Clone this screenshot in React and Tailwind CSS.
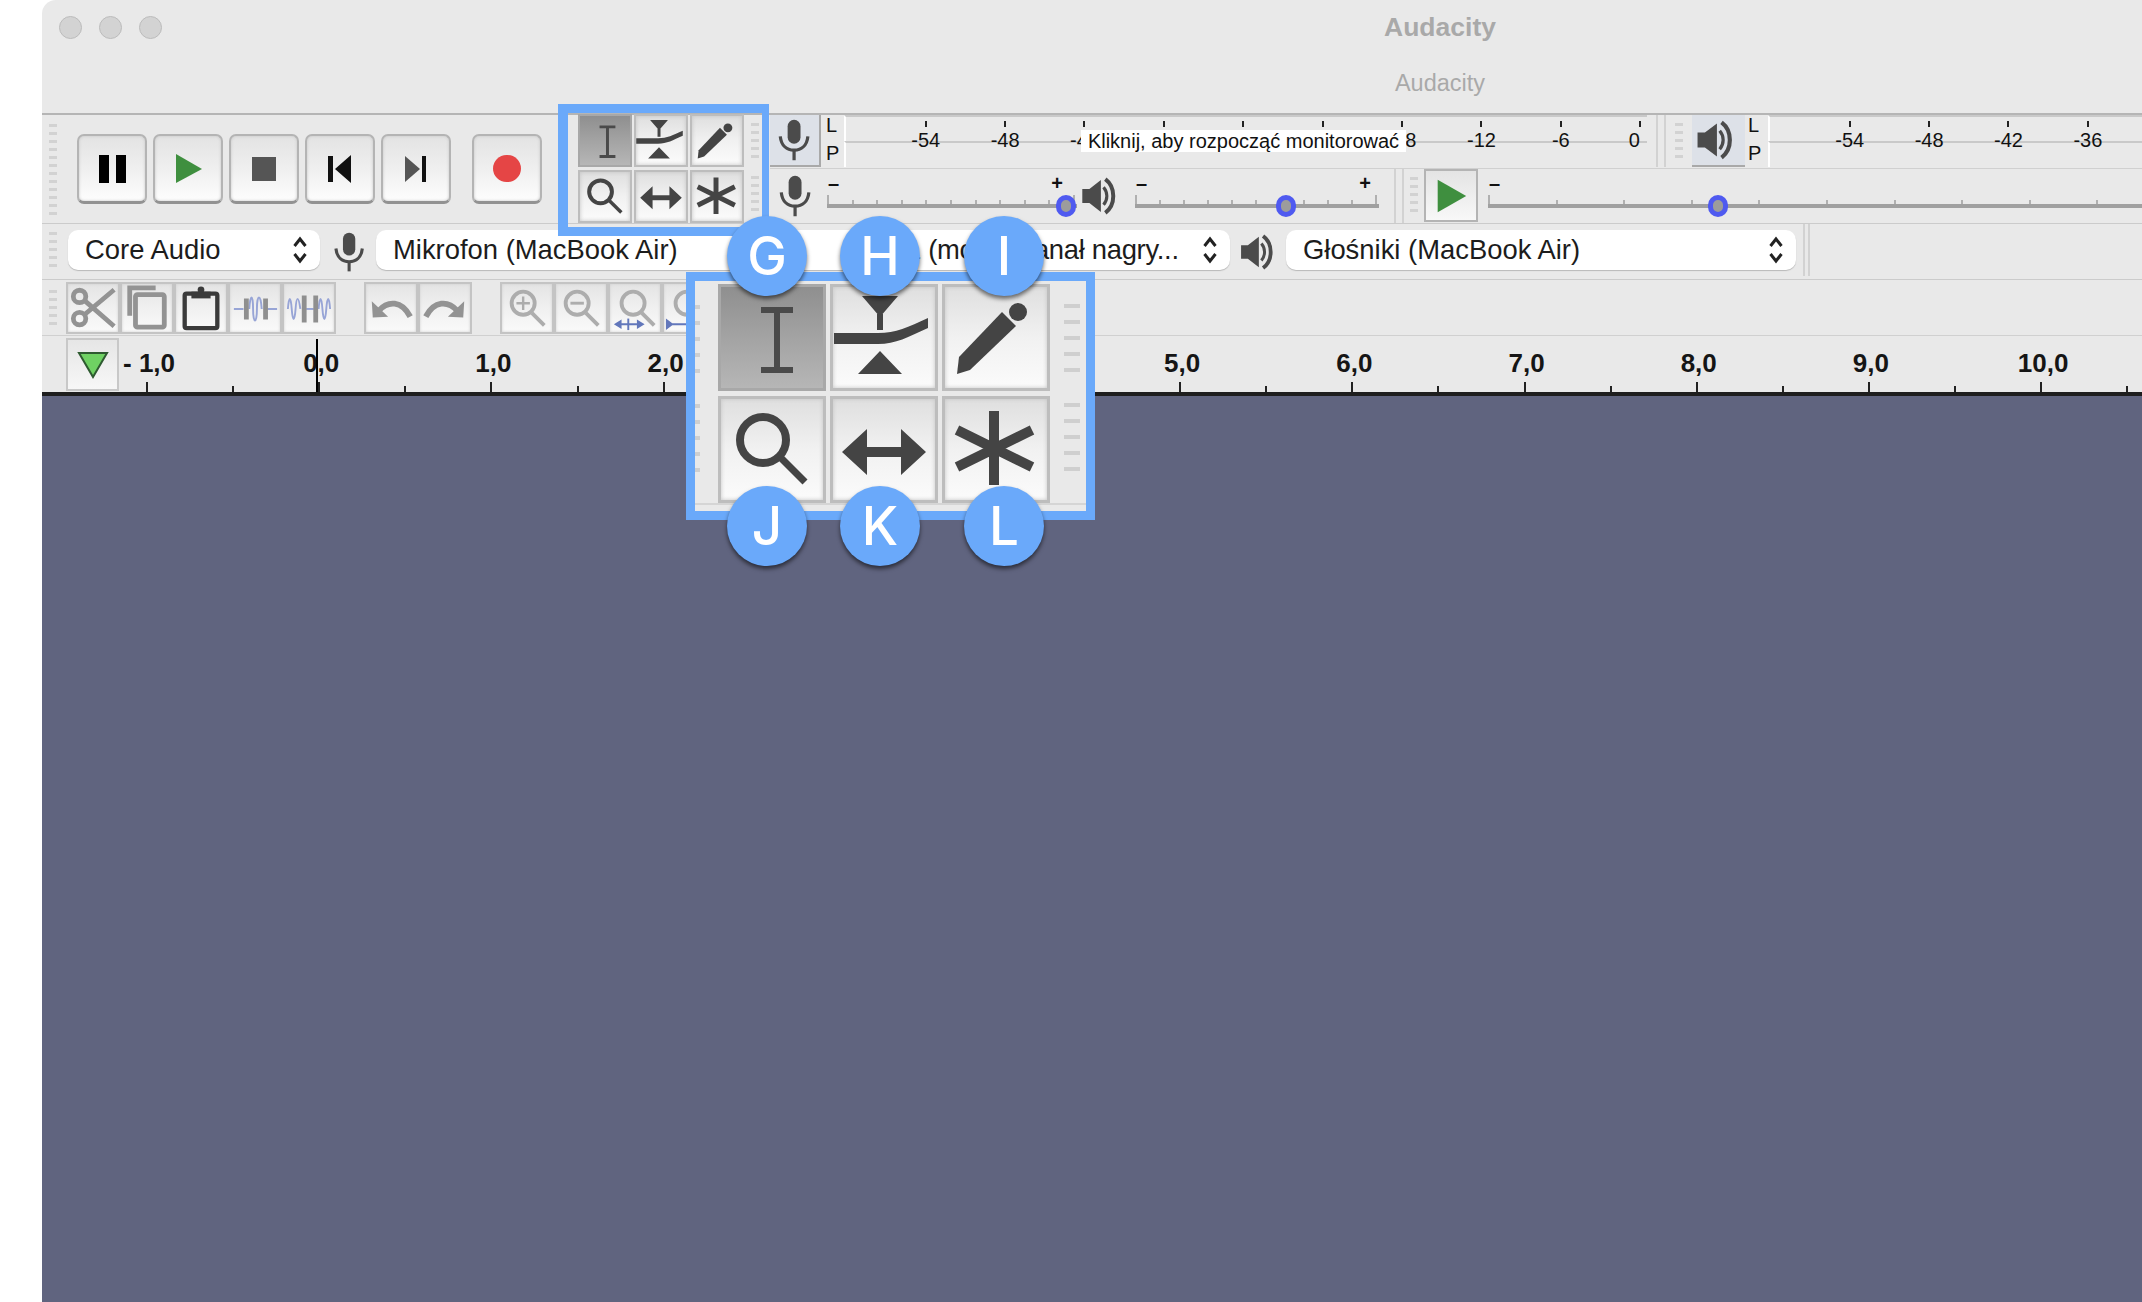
import React from "react"

const inputMeter = ["-54", "-48", "-42", "", "", "", "-18", "-12", "-6", "0"]
const outputMeter = ["-54", "-48", "-42", "-36"]
const rulerLabels = ["- 1,0", "0,0", "1,0", "2,0", "3,0", "4,0", "5,0", "6,0", "7,0", "8,0", "9,0", "10,0"]

function Grip({ count, size = "small" }) {
  const lines = Array.from({ length: count })
  if (size === "large") {
    return (
      <div className="flex flex-col gap-[12px]">
        {lines.map((_, i) => <div key={i} className="w-[16px] h-[4px] bg-[#cfcfcf]" />)}
      </div>
    )
  }
  return (
    <div className="flex flex-col gap-[5px]">
      {lines.map((_, i) => <div key={i} className="w-[8px] h-[3px] bg-[#d2d2d2]" />)}
    </div>
  )
}

function Mic({ className }) {
  return (
    <svg viewBox="0 0 50 52" className={className}>
      <rect x="17" y="4" width="14" height="26" rx="7" fill="#4b4b4b" />
      <path d="M9 22c1 10 7 15 15 15s14-5 15-15" fill="none" stroke="#4b4b4b" strokeWidth="3.500" />
      <path d="M24 37v11" stroke="#4b4b4b" strokeWidth="3.500" />
    </svg>
  )
}

function Speaker({ className }) {
  return (
    <svg viewBox="0 0 46 52" className={className}>
      <path d="M3 18h8l13-10v36L11 34H3z" fill="#4b4b4b" />
      <path d="M27 16c5 6 5 14 0 20" fill="none" stroke="#4b4b4b" strokeWidth="3.500" />
      <path d="M29 7c12 9 12 29 0 38" fill="none" stroke="#4b4b4b" strokeWidth="4.500" />
    </svg>
  )
}

function Chevrons() {
  return (
    <svg viewBox="0 0 16 32" className="w-[16px] h-[32px] shrink-0">
      <path d="M2.500 12L8 5l5.500 7M2.500 20L8 27l5.500-7" fill="none" stroke="#222" strokeWidth="3" />
    </svg>
  )
}

function TransportButton({ children, className = "" }) {
  return (
    <div className={`w-[70px] h-[70px] shrink-0 flex items-center justify-center rounded-[7px] border-2 border-b-[3px] border-[#b4b4b4] border-b-[#929292] bg-gradient-to-b from-[#e3e3e3] via-[#efefef] to-[#fdfdfd] shadow-[inset_0_0_3px_#c4c4c4] ${className}`}>
      {children}
    </div>
  )
}

function ToolIcon({ name, className }) {
  const c = "#444"
  return (
    <svg viewBox="0 0 108 107" className={className}>
      {name === "select" && <path d="M43 26h32M59 26v60M43 86h32" fill="none" stroke="#4a4a4a" strokeWidth="6" />}
      {name === "envelope" && (
        <g fill={c}>
          <path d="M32 12h36L50 33zM50 67l22 23H28z" />
          <path d="M47 30h6v16h-6z" />
          <path d="M4 49h44c18 0 30-6 50-15v10c-20 9-32 16-50 16H4z" />
        </g>
      )}
      {name === "draw" && (
        <g fill={c}>
          <path d="M60 28l14 14-46 44-13 4 2-17z" />
          <circle cx="76" cy="28" r="9" />
        </g>
      )}
      {name === "zoom" && (
        <g fill="none" stroke={c}>
          <circle cx="45" cy="44" r="23" strokeWidth="8" />
          <path d="M63 62l24 24" strokeWidth="7" />
        </g>
      )}
      {name === "slide" && (
        <g fill={c}>
          <path d="M12 56l25-23v46zM96 56L71 33v46z" />
          <path d="M30 51h48v10H30z" />
        </g>
      )}
      {name === "multi" && (
        <g fill="none" stroke={c} strokeWidth="10">
          <path d="M52 15v74M15 34l75 37M15 71l75-37" />
        </g>
      )}
    </svg>
  )
}

function ToolButton({ name, pressed, large }) {
  const box = large ? "w-[108px] h-[107px]" : "w-[54px] h-[53px]"
  const look = pressed
    ? "bg-gradient-to-b from-[#8f8f8f] via-[#a3a3a3] to-[#b6b6b6] border-[#a8a8a8]"
    : "bg-gradient-to-b from-[#dfdfdf] via-[#f1f1f1] to-[#fbfbfb] border-[#bdbdbd] shadow-[inset_0_0_4px_#c4c4c4]"
  return (
    <div className={`${box} ${look} ${large ? "border-[3px]" : "border-2"} flex items-center justify-center`}>
      <ToolIcon name={name} className={large ? "w-[108px] h-[107px] shrink-0 blur-[0.7px]" : "w-[54px] h-[53px] shrink-0"} />
    </div>
  )
}

function EditIcon({ name }) {
  const g = "#939393"
  const z = "#adadad"
  const blue = "#98a5d6"
  return (
    <svg viewBox="0 0 52 50" className="w-[50px] h-[48px] blur-[0.4px]">
      {name === "cut" && (
        <g fill="none" stroke={g} strokeWidth="5">
          <circle cx="12" cy="13" r="6.500" />
          <circle cx="12" cy="36" r="6.500" />
          <path d="M17 17l31 27M17 32L48 6" />
        </g>
      )}
      {name === "copy" && (
        <g fill="none" stroke={g} strokeWidth="5">
          <path d="M8 33V4h27" />
          <rect x="14" y="11" width="30" height="34" rx="2" />
        </g>
      )}
      {name === "paste" && (
        <g>
          <rect x="9" y="10" width="34" height="36" rx="2" fill="none" stroke="#3a3a3a" strokeWidth="4.500" />
          <path d="M16 8h20v7H16z" fill="#3a3a3a" />
          <circle cx="26" cy="6" r="3.500" fill="#3a3a3a" />
        </g>
      )}
      {name === "trim" && (
        <g fill="none">
          <path d="M4 26h10M39 26h10" stroke={blue} strokeWidth="2" />
          <path d="M20 26c1-16 4-16 4 0s4 16 4 0 4-16 5 0" stroke={blue} strokeWidth="2" />
          <path d="M17 15v22M37 15v22" stroke="#8f8f8f" strokeWidth="5" />
        </g>
      )}
      {name === "silence" && (
        <g fill="none">
          <path d="M4 26c1-14 3-14 4 0s3 14 4 0 3-14 5 0M36 26c1-14 3-14 4 0s3 14 4 0 3-14 4 0" stroke={blue} strokeWidth="2" />
          <path d="M23 26h8" stroke={blue} strokeWidth="2" />
          <path d="M21 12v28M33 12v28" stroke="#8f8f8f" strokeWidth="5" />
        </g>
      )}
      {name === "undo" && (
        <g>
          <path d="M6 18l1 17 16-1z" fill={g} />
          <path d="M13 28c10-11 24-11 33 6" fill="none" stroke={g} strokeWidth="6" />
        </g>
      )}
      {name === "redo" && (
        <g>
          <path d="M46 18l-1 17-16-1z" fill={g} />
          <path d="M39 28C29 17 15 17 6 34" fill="none" stroke={g} strokeWidth="6" />
        </g>
      )}
      {name === "zoomin" && (
        <g fill="none" stroke={z}>
          <circle cx="22" cy="20" r="12" strokeWidth="4" />
          <path d="M31 30l13 13" strokeWidth="4" />
          <path d="M22 13v14M15 20h14" strokeWidth="2.500" />
        </g>
      )}
      {name === "zoomout" && (
        <g fill="none" stroke={z}>
          <circle cx="22" cy="20" r="12" strokeWidth="4" />
          <path d="M31 30l13 13" strokeWidth="4" />
          <path d="M15 20h14" strokeWidth="3" />
        </g>
      )}
      {name === "fit" && (
        <g>
          <g fill="none" stroke={z} strokeWidth="4">
            <circle cx="24" cy="20" r="12" />
            <path d="M33 30l13 13" />
          </g>
          <path d="M4 42l8-5v10zM12 41h16v2H12zM36 42l-8-5v10z" fill="#6277bb" />
          <path d="M19 36v12" stroke="#6277bb" strokeWidth="2" />
        </g>
      )}
      {name === "fitv" && (
        <g>
          <g fill="none" stroke={z} strokeWidth="4">
            <circle cx="24" cy="20" r="12" />
            <path d="M33 30l13 13" />
          </g>
          <path d="M2 36l8 6-8 6zM8 41h24v2H8z" fill="#6277bb" />
        </g>
      )}
    </svg>
  )
}

function EditButton({ name }) {
  return (
    <div className="w-[54px] h-[52px] shrink-0 flex items-center justify-center border-2 border-[#c4c4c4] bg-gradient-to-b from-[#e4e4e4] via-[#f0f0f0] to-[#fafafa] shadow-[inset_0_0_3px_#cfcfcf]">
      <EditIcon name={name} />
    </div>
  )
}

function Select({ text, className = "" }) {
  return (
    <div className={`h-[40px] shrink-0 flex items-center justify-between pl-[17px] pr-[12px] bg-white rounded-[10px] shadow-[0_1px_1px_#b9b9b9] text-[27.4px] leading-none text-[#1c1c1c] whitespace-nowrap ${className}`}>
      <span>{text}</span>
      <Chevrons />
    </div>
  )
}

function Meter({ labels, className = "", children }) {
  return (
    <div className={`relative h-[52px] flex flex-col overflow-hidden ${className}`}>
      <div className="h-[26px] border-t-2 border-l-2 border-t-[#c9c9c9] border-l-white" />
      <div className="h-[26px] border-t-2 border-l-2 border-t-[#c9c9c9] border-l-white" />
      <div className="absolute inset-0 flex pl-[42px] text-[20px] leading-none text-[#111]">
        {labels.map((label, i) => (
          <div key={i} className="w-[79.4px] shrink-0 flex flex-col items-center pt-[6px]">
            <div className="w-[2px] h-[6px] bg-[#222]" />
            <span className={`mt-[3px] ${label === "0" ? "-translate-x-[6px]" : ""}`}>{label}</span>
          </div>
        ))}
      </div>
      {children}
    </div>
  )
}

function ChannelLetters({ className = "pl-[5px]" }) {
  return (
    <div className={`w-[23px] h-[52px] -mt-[2px] shrink-0 flex flex-col items-start justify-between text-[20px] leading-[24px] text-[#111] ${className}`}>
      <span>L</span>
      <span>P</span>
    </div>
  )
}

function Slider({ ticks, thumb, plus, labelPad = "", className = "" }) {
  return (
    <div className={`relative h-full flex flex-col justify-end pb-[15px] ${className}`}>
      <div className={`flex justify-between px-[1px] h-[22px] text-[20px] font-bold leading-none text-[#111] ${labelPad}`}>
        <span>–</span>
        {plus && <span>+</span>}
      </div>
      <div className="flex justify-between items-end h-[9px] pr-[2px]">
        {Array.from({ length: ticks }).map((_, i) => (
          <div key={i} className={`w-[2px] bg-[#b0b0b0] ${i === 0 || (plus && i === ticks - 1) ? "h-[9px]" : "h-[4px]"}`} />
        ))}
      </div>
      <div className="h-[4px] bg-[#a0a0a0]" />
      <div className={`absolute bottom-[6px] w-[20px] h-[22px] rounded-full border-[5px] border-[#4f5af0] bg-[#9c9c9c] ${thumb}`} />
    </div>
  )
}

function Callout() {
  const names = ["select", "envelope", "draw", "zoom", "slide", "multi"]
  return (
    <div className="absolute left-[686px] top-[272px] w-[409px] h-[248px] border-[9px] border-[#6aa9fa] bg-[#e9e9e9] flex flex-col">
      <div className="flex pt-[3px] border-b-2 border-[#d5d5d5] h-[224px]">
        <div className="w-[5px] pt-[21px] overflow-hidden shrink-0">
          <Grip count={5} size="large" />
          <div className="h-[31px]" />
          <Grip count={5} size="large" />
        </div>
        <div className="grid grid-cols-[108px_108px_108px] grid-rows-[107px_107px] gap-x-[4px] gap-y-[5px] ml-[18px]">
          {names.map((n, i) => <ToolButton key={n} name={n} pressed={i === 0} large />)}
        </div>
        <div className="ml-[14px] pt-[20px]">
          <Grip count={5} size="large" />
          <div className="h-[31px]" />
          <Grip count={5} size="large" />
        </div>
      </div>
    </div>
  )
}

function Badge({ letter, className }) {
  return (
    <div className={`absolute w-[80px] h-[80px] rounded-full bg-[#6aa9fa] shadow-[0_3px_4px_rgba(0,0,0,0.55)] flex items-center justify-center text-white text-[53px] font-medium leading-none font-['Inter',sans-serif] ${className}`}>
      {letter}
    </div>
  )
}

export default function App() {
  return (
    <div className="relative w-[2142px] h-[1302px] overflow-hidden bg-white flex font-['Liberation_Sans',Arial,sans-serif]">
      <div className="w-[42px] shrink-0" />

      <div className="flex-1 min-w-0 flex flex-col bg-[#e9e9e9] rounded-tl-[14px] overflow-hidden">
        {/* title bar, the window runs on past the right edge so the title sits off centre */}
        <div className="relative h-[113px] shrink-0 flex flex-col items-center pl-[696px]">
          <div className="absolute left-[17px] top-[16px] flex gap-[17px]">
            <div className="w-[23px] h-[23px] rounded-full bg-[#d3d3d3] border border-[#bcbcbc]" />
            <div className="w-[23px] h-[23px] rounded-full bg-[#d3d3d3] border border-[#bcbcbc]" />
            <div className="w-[23px] h-[23px] rounded-full bg-[#d3d3d3] border border-[#bcbcbc]" />
          </div>
          <div className="mt-[12px] text-[26.500px] leading-[30px] font-bold text-[#a9a9a9]">Audacity</div>
          <div className="mt-[28px] text-[23.500px] leading-[26px] text-[#a9a9a9]">Audacity</div>
        </div>

        {/* transport, tools, meters */}
        <div className="h-[111px] shrink-0 flex border-t-2 border-b border-t-[#b5b5b5] border-b-[#cbcbcb]">
          <div className="w-[516px] shrink-0 flex items-center pl-[7px]">
            <Grip count={12} />
            <div className="flex gap-[6px] ml-[20px]">
              <TransportButton>
                <div className="flex gap-[7px]">
                  <div className="w-[10px] h-[28px] bg-black" />
                  <div className="w-[10px] h-[28px] bg-black" />
                </div>
              </TransportButton>
              <TransportButton>
                <svg viewBox="0 0 32 32" className="w-[32px] h-[32px]"><path d="M4 1l26 15L4 30z" fill="#3f8f3f" /></svg>
              </TransportButton>
              <TransportButton>
                <div className="w-[24px] h-[24px] bg-[#555]" />
              </TransportButton>
              <TransportButton>
                <svg viewBox="0 0 32 32" className="w-[32px] h-[32px]"><path d="M4 3h5v26H4zM27 2v28L11 16z" fill="#111" /></svg>
              </TransportButton>
              <TransportButton>
                <svg viewBox="0 0 32 32" className="w-[32px] h-[32px]"><path d="M5 3v26l15-13z" fill="#555" /><path d="M22 3h4v26h-4z" fill="#111" /></svg>
              </TransportButton>
              <TransportButton className="ml-[15px]">
                <div className="w-[28px] h-[27px] rounded-full bg-[#e54545]" />
              </TransportButton>
            </div>
          </div>

          <div className="w-[212px] shrink-0 flex -mt-[1px] pl-[20px]">
            <div className="grid grid-cols-[54px_54px_54px] grid-rows-[53px_53px] gap-x-[2px] gap-y-[3px]">
              <ToolButton name="select" pressed />
              <ToolButton name="envelope" />
              <ToolButton name="draw" />
              <ToolButton name="zoom" />
              <ToolButton name="slide" />
              <ToolButton name="multi" />
            </div>
            <div className="ml-[7px] pt-[9px]">
              <Grip count={5} />
              <div className="h-[18px]" />
              <Grip count={5} />
            </div>
          </div>

          <div className="flex-1 min-w-0 flex flex-col">
            <div className="h-[53px] shrink-0 flex">
              <div className="w-[51px] h-[52px] shrink-0 flex items-center justify-center bg-[#dde1e8] border-r-2 border-b-2 border-[#a9a9a9]">
                <Mic className="w-[46px] h-[48px]" />
              </div>
              <ChannelLetters />
              <Meter labels={inputMeter} className="w-[803px] shrink-0">
                <div className="absolute left-[237px] top-[15px] w-[325px] h-[22px] bg-white flex items-center justify-center text-[20px] leading-none text-[#111] whitespace-nowrap">
                  Kliknij, aby rozpocząć monitorować
                </div>
              </Meter>
              <div className="w-[2px] h-[52px] ml-[9px] bg-[#d2d2d2] shrink-0" />
              <div className="w-[2px] h-[52px] ml-[6px] bg-[#d2d2d2] shrink-0" />
              <div className="ml-[9px] pt-[8px] shrink-0"><Grip count={5} /></div>
              <div className="w-[53px] h-[52px] ml-[9px] shrink-0 flex items-center justify-center bg-[#dde1e8] border-b-2 border-[#a9a9a9]">
                <Speaker className="w-[44px] h-[48px] -translate-x-[3px]" />
              </div>
              <ChannelLetters className="pl-[3px]" />
              <Meter labels={outputMeter} className="flex-1 min-w-0" />
            </div>

            <div className="flex-1 flex border-t border-[#d0d0d0]">
              <div className="w-[51px] shrink-0 flex items-center justify-center">
                <Mic className="w-[46px] h-[48px]" />
              </div>
              <Slider ticks={11} plus labelPad="pr-[14px]" thumb="left-[229px]" className="w-[250px] ml-[6px] shrink-0" />
              <div className="w-[46px] shrink-0 flex items-center justify-center">
                <Speaker className="w-[42px] h-[46px]" />
              </div>
              <Slider ticks={11} plus labelPad="pr-[8px]" thumb="left-[141px]" className="w-[244px] ml-[12px] shrink-0" />
              <div className="w-[2px] ml-[15px] bg-[#d2d2d2] shrink-0" />
              <div className="w-[2px] ml-[6px] bg-[#d2d2d2] shrink-0" />
              <div className="ml-[6px] pt-[8px] shrink-0"><Grip count={5} /></div>
              <div className="w-[54px] h-[53px] ml-[6px] shrink-0 flex items-center justify-center border-2 border-[#b4b4b4] bg-gradient-to-b from-[#e4e4e4] to-[#f8f8f8]">
                <svg viewBox="0 0 40 40" className="w-[38px] h-[38px]"><path d="M6 3l30 17L6 37z" fill="#3f8f3f" /></svg>
              </div>
              <Slider ticks={11} thumb="left-[220px]" className="w-[680px] ml-[10px] shrink-0" />
            </div>
          </div>
        </div>

        {/* device row */}
        <div className="h-[56px] shrink-0 flex items-center pb-[4px] border-b border-[#cbcbcb]">
          <div className="ml-[7px] shrink-0"><Grip count={5} /></div>
          <Select text="Core Audio" className="w-[252px] ml-[11px]" />
          <div className="w-[56px] shrink-0 flex justify-center pl-[3px] pt-[4px]"><Mic className="w-[44px] h-[46px]" /></div>
          <Select text="Mikrofon (MacBook Air)" className="w-[504px]" />
          <Select text="1 (mono) kanał nagry..." className="w-[341px] ml-[9px] tracking-[-0.3px]" />
          <div className="w-[56px] shrink-0 flex justify-center pt-[4px]"><Speaker className="w-[40px] h-[44px]" /></div>
          <Select text="Głośniki (MacBook Air)" className="w-[510px]" />
          <div className="w-[2px] h-[52px] ml-[7px] bg-[#d2d2d2] shrink-0" />
          <div className="w-[2px] h-[52px] ml-[3px] bg-[#d2d2d2] shrink-0" />
        </div>

        {/* edit row */}
        <div className="h-[56px] shrink-0 flex items-center border-b border-[#d0d0d0]">
          <div className="ml-[7px] shrink-0"><Grip count={5} /></div>
          <div className="flex ml-[9px]">
            <EditButton name="cut" />
            <EditButton name="copy" />
            <EditButton name="paste" />
            <EditButton name="trim" />
            <EditButton name="silence" />
          </div>
          <div className="flex ml-[28px]">
            <EditButton name="undo" />
            <EditButton name="redo" />
          </div>
          <div className="flex ml-[28px]">
            <EditButton name="zoomin" />
            <EditButton name="zoomout" />
            <EditButton name="fit" />
            <EditButton name="fitv" />
          </div>
        </div>

        {/* timeline ruler */}
        <div className="relative h-[56px] shrink-0 flex overflow-hidden">
          <div className="w-[53px] h-[53px] ml-[24px] mt-[2px] shrink-0 z-10 flex items-center justify-center border-2 border-[#c8c8c8] bg-gradient-to-b from-[#e6e6e6] to-[#f7f7f7]">
            <svg viewBox="0 0 34 30" className="w-[34px] h-[30px]"><path d="M3 3h28L17 27z" fill="#6fd163" stroke="#2e5a30" strokeWidth="2" /></svg>
          </div>
          <div className="flex -ml-[15px]">
            {rulerLabels.map((label) => (
              <React.Fragment key={label}>
                <div className="w-[86.1px] shrink-0 flex flex-col items-center justify-end">
                  <span className="text-[26px] font-bold leading-none text-[#151515] whitespace-nowrap mb-[6px] translate-x-[2px]">{label}</span>
                  <div className="w-[2px] h-[10px] bg-[#222]" />
                </div>
                <div className="w-[86.1px] shrink-0 flex flex-col items-center justify-end">
                  <div className="w-[2px] h-[6px] bg-[#222]" />
                </div>
              </React.Fragment>
            ))}
          </div>
          <div className="absolute left-[274px] top-[3px] bottom-0 w-[2px] bg-black" />
        </div>

        <div className="h-[4px] shrink-0 bg-[#1e1e1e]" />
        <div className="flex-1 bg-[#60647f]" />
      </div>

      {/* highlight round the tools toolbar */}
      <div className="absolute left-[558px] top-[104px] w-[211px] h-[132px] border-[9px] border-l-[10px] border-r-[7px] border-[#6aa9fa]" />

      <Callout />

      <Badge letter="G" className="left-[727px] top-[216px]" />
      <Badge letter="H" className="left-[840px] top-[216px]" />
      <Badge letter="I" className="left-[964px] top-[216px]" />
      <Badge letter="J" className="left-[727px] top-[486px]" />
      <Badge letter="K" className="left-[840px] top-[486px]" />
      <Badge letter="L" className="left-[964px] top-[486px]" />
    </div>
  )
}
